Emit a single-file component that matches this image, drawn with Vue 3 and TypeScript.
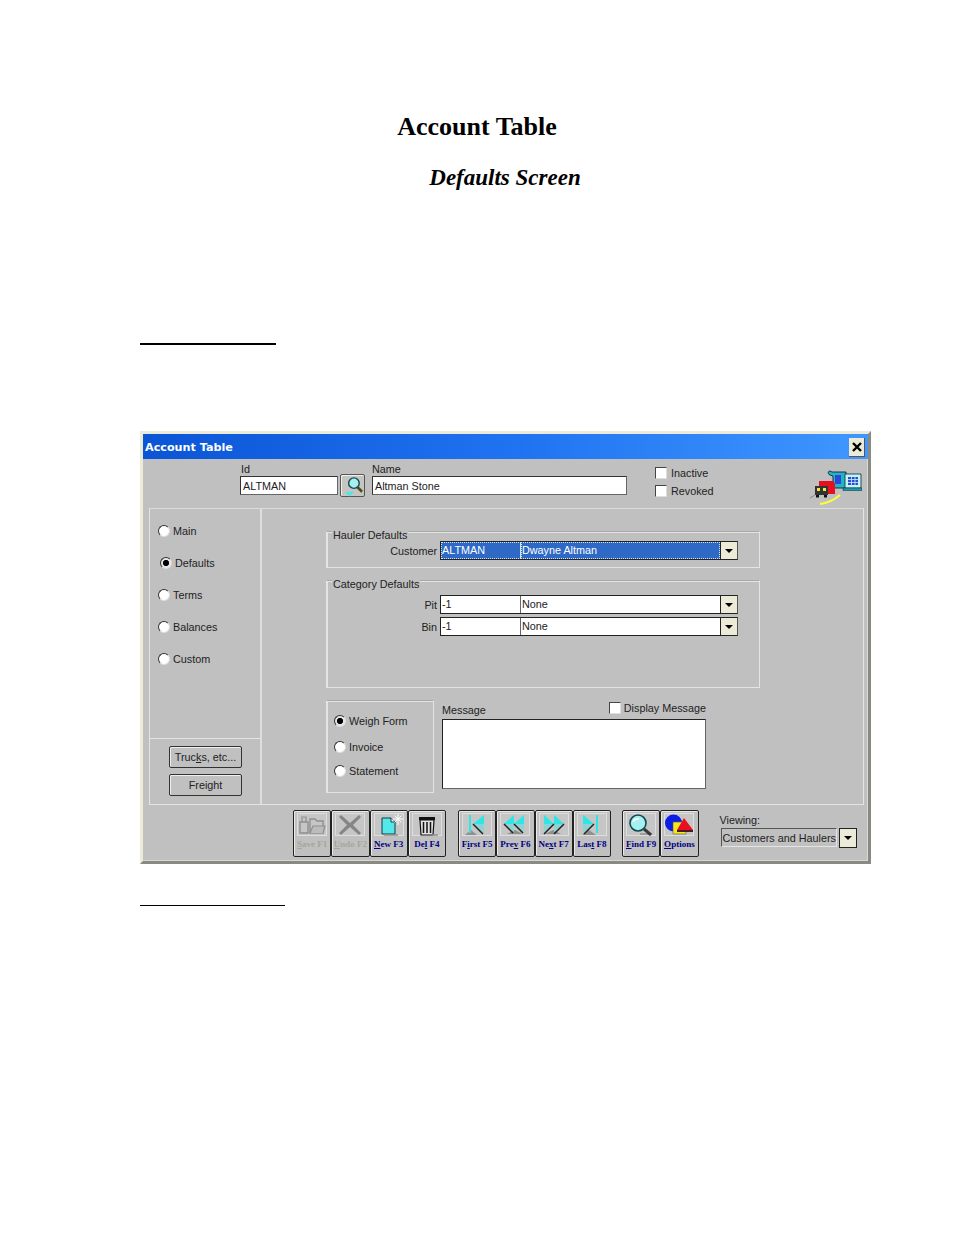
<script setup lang="ts">
interface Shape { d: string; fill?: string; stroke?: string; w?: number }
interface Tool { pre: string; key: string; post: string; off?: boolean; icon: Shape[] }

const navItems = [
  { label: 'Main', on: false },
  { label: 'Defaults', on: true },
  { label: 'Terms', on: false },
  { label: 'Balances', on: false },
  { label: 'Custom', on: false },
]
const formItems = [
  { label: 'Weigh Form', on: true, cls: 'w1' },
  { label: 'Invoice', on: false, cls: 'w2' },
  { label: 'Statement', on: false, cls: 'w3' },
]
const shade = '#8f8f8f'
const cyan = '#2fe6e6'
const pale = '#8fd2d2'
const edge = '#222'
const groups: Tool[][] = [
  [
    { pre: '', key: 'S', post: 'ave F1', off: true, icon: [
      { d: 'M3 9h8v11H3z', fill: 'none', stroke: '#8f8f8f', w: 1.4 },
      { d: 'M5 9V4h4v5', fill: 'none', stroke: '#8f8f8f', w: 1.2 },
      { d: 'M13 6h5l2 2h6v12H13z', fill: 'none', stroke: '#8f8f8f', w: 1.4 },
      { d: 'M13 20l3-7h12l-2 7', fill: '#bcbcbc', stroke: '#8f8f8f', w: 1.2 },
    ] },
    { pre: '', key: 'U', post: 'ndo F2', off: true, icon: [
      { d: 'M6 2l9 8 9-8 2 2-8 8 8 8-2 2-9-8-9 8-2-2 8-8-8-8z', fill: '#858585' },
    ] },
    { pre: '', key: 'N', post: 'ew F3', icon: [
      { d: 'M8 5h9l4 4v12H8z', fill: '#55e8e8', stroke: '#0c3a4a', w: 1 },
      { d: 'M17 5v4h4', fill: '#fff', stroke: '#0c3a4a', w: 1 },
      { d: 'M24 1v11M19 6h10M20.5 2.5l7 7M27.5 2.5l-7 7', fill: 'none', stroke: '#fff', w: 1 },
      { d: 'M10 22h14', fill: 'none', stroke: shade, w: 1.5 },
    ] },
    { pre: 'De', key: 'l', post: ' F4', icon: [
      { d: 'M7 4h16v3H7z', fill: '#111' },
      { d: 'M8 7h14l-1 15H9z', fill: '#e2e2e2', stroke: '#111', w: 1.2 },
      { d: 'M11.5 9v11M15 9v11M18.5 9v11', fill: 'none', stroke: '#111', w: 1.5 },
      { d: 'M20 22h6', fill: 'none', stroke: shade, w: 1.5 },
    ] },
  ],
  [
    { pre: 'F', key: 'i', post: 'rst F5', icon: [
      { d: 'M3 22l6-5 6 5z', fill: shade },
      { d: 'M7 2h2v18H7z', fill: cyan },
      { d: 'M22 2v18L11 11z', fill: pale },
      { d: 'M22 2v9H11z', fill: cyan },
      { d: 'M11 11l10 10', fill: 'none', stroke: edge, w: 1.5 },
    ] },
    { pre: 'Pre', key: 'v', post: ' F6', icon: [
      { d: 'M7 21l8-4 8 4z', fill: shade },
      { d: 'M14 2v17L4 11z', fill: pale },
      { d: 'M14 2v9H4z', fill: cyan },
      { d: 'M24 2v17L14 11z', fill: pale },
      { d: 'M24 2v9H14z', fill: cyan },
      { d: 'M4 11l9 9M14 11l9 9', fill: 'none', stroke: edge, w: 1.5 },
    ] },
    { pre: 'Ne', key: 'x', post: 't F7', icon: [
      { d: 'M6 21l8-4 8 4z', fill: shade },
      { d: 'M5 2v17l10-8z', fill: pale },
      { d: 'M5 2v9h10z', fill: cyan },
      { d: 'M15 2v17l10-8z', fill: pale },
      { d: 'M15 2v9h10z', fill: cyan },
      { d: 'M15 11l-10 10M25 11l-10 10', fill: 'none', stroke: edge, w: 1.5 },
    ] },
    { pre: 'Las', key: 't', post: ' F8', icon: [
      { d: 'M5 22l7-5 7 5z', fill: shade },
      { d: 'M6 2v18l11-9z', fill: pale },
      { d: 'M6 2v9h11z', fill: cyan },
      { d: 'M19 2h2v18h-2z', fill: cyan },
      { d: 'M17 11L7 21', fill: 'none', stroke: edge, w: 1.5 },
    ] },
  ],
  [
    { pre: '', key: 'F', post: 'ind F9', icon: [
      { d: 'M14 21h12', fill: 'none', stroke: shade, w: 1.5 },
      { d: 'M4 10a8 8 0 1 0 16 0a8 8 0 1 0-16 0z', fill: '#a6f0f0', stroke: '#0b4a55', w: 1.6 },
      { d: 'M7 9a5 5 0 0 1 6-3', fill: 'none', stroke: '#fff', w: 1.8 },
      { d: 'M18 16l7 6', fill: 'none', stroke: '#3a3a3a', w: 3 },
    ] },
    { pre: '', key: 'O', post: 'ptions', icon: [
      { d: 'M1 10a8.5 8.5 0 1 0 17 0a8.5 8.5 0 1 0-17 0z', fill: '#0a1ee6' },
      { d: 'M9 9h13v12H9z', fill: '#f5e61e', stroke: '#555', w: 0.6 },
      { d: 'M20 5l9 12H13z', fill: '#e60f1e' },
      { d: 'M13 17h16v2H13z', fill: '#4a1a2a' },
    ] },
  ],
]
const idIcon: Shape[] = [
  { d: 'M4 17h10l-5 5z', fill: '#53e5e5' },
  { d: 'M8 8a5.5 5.5 0 1 0 11 0a5.5 5.5 0 1 0-11 0z', fill: '#a6f0f0', stroke: '#17465a', w: 1.5 },
  { d: 'M17 12l5 5', fill: 'none', stroke: '#4d4a1e', w: 2.8 },
]
const logo: Shape[] = [
  { d: 'M22 4c-4-3-5 2-2 3l3 1v12h13V4z', fill: '#1fb4c8', stroke: '#123', w: 0.9 },
  { d: 'M25 7h6v9h-6z', fill: '#2f45d8' },
  { d: 'M35 6h16v14H35z', fill: '#bff7f7', stroke: '#123', w: 0.8 },
  { d: 'M38 9h10v8H38z', fill: '#3348d8' },
  { d: 'M38 11.5h10M38 14.5h10M41.5 9v8M45 9v8', fill: 'none', stroke: '#bff7f7', w: 0.8 },
  { d: 'M33 20h19v2.5H33z', fill: '#13a0ad', stroke: '#123', w: 0.5 },
  { d: 'M9 13h14l2 3v10H9z', fill: '#e60f1e' },
  { d: 'M5 18h13v9H5z', fill: '#333' },
  { d: 'M7 20h3v3H7zM13 20h3v3h-3z', fill: '#f0e64a' },
  { d: 'M6 27h3v2.5H6zM14 27h3v2.5h-3z', fill: '#111' },
  { d: 'M0 30l5-3', fill: 'none', stroke: '#888', w: 1 },
  { d: 'M10 36c8-1 14-4 20-9', fill: 'none', stroke: '#ffff33', w: 2 },
]
</script>

<template>
  <div class="page">
    <h1 class="title">Account Table</h1>
    <h2 class="subtitle">Defaults Screen</h2>
    <div class="rule rule-a"></div>

    <section class="window">
      <header class="titlebar">
        <span>Account Table</span>
        <span class="close">
          <svg width="10" height="10" viewBox="0 0 10 10"><path d="M1 1l8 8M9 1l-8 8" stroke="#000" stroke-width="2.4" /></svg>
        </span>
      </header>

      <div class="top">
        <div class="field id-field">
          <label>Id</label>
          <div class="input">ALTMAN</div>
        </div>
        <button class="find">
          <svg width="24" height="22" viewBox="0 0 24 22"><path v-for="(s, i) in idIcon" :key="i" :d="s.d" :fill="s.fill" :stroke="s.stroke" :stroke-width="s.w" /></svg>
        </button>
        <div class="field name-field">
          <label>Name</label>
          <div class="input">Altman Stone</div>
        </div>
        <div class="checks">
          <div class="check-row"><span class="check"></span>Inactive</div>
          <div class="check-row"><span class="check"></span>Revoked</div>
        </div>
        <svg class="logo" width="52" height="38" viewBox="0 0 52 38"><path v-for="(s, i) in logo" :key="i" :d="s.d" :fill="s.fill" :stroke="s.stroke" :stroke-width="s.w" /></svg>
      </div>

      <div class="panel">
        <aside class="nav">
          <div class="nav-list">
            <div v-for="item in navItems" :key="item.label" class="radio-row" :class="{ shifted: item.on }">
              <span class="radio" :class="{ on: item.on }"></span>{{ item.label }}
            </div>
          </div>
          <div class="nav-buttons">
            <button class="push">Truc<u>k</u>s, etc...</button>
            <button class="push">Freight</button>
          </div>
        </aside>

        <div class="content">
          <div class="group hauler">
            <span class="legend">Hauler Defaults</span>
            <div class="row">
              <span class="row-label">Customer</span>
              <div class="combo selected">
                <span class="cell first">ALTMAN</span>
                <span class="cell second">Dwayne Altman</span>
                <span class="arrow"><i></i></span>
              </div>
            </div>
          </div>

          <div class="group category">
            <span class="legend">Category Defaults</span>
            <div class="row">
              <span class="row-label">Pit</span>
              <div class="combo">
                <span class="cell first">-1</span>
                <span class="cell second">None</span>
                <span class="arrow"><i></i></span>
              </div>
            </div>
            <div class="row">
              <span class="row-label">Bin</span>
              <div class="combo">
                <span class="cell first">-1</span>
                <span class="cell second">None</span>
                <span class="arrow"><i></i></span>
              </div>
            </div>
          </div>

          <div class="lower">
            <div class="group forms">
              <div v-for="item in formItems" :key="item.label" class="radio-row" :class="item.cls">
                <span class="radio" :class="{ on: item.on }"></span>{{ item.label }}
              </div>
            </div>
            <div class="message">
              <div class="message-head">
                <span>Message</span>
                <span class="check-row display"><span class="check"></span>Display Message</span>
              </div>
              <div class="textarea"></div>
            </div>
          </div>
        </div>
      </div>

      <footer class="toolbar">
        <div v-for="(group, g) in groups" :key="g" class="tool-group">
          <button v-for="tool in group" :key="tool.pre + tool.key + tool.post" class="tool" :class="{ off: tool.off }">
            <span class="tile">
              <svg width="30" height="23" viewBox="0 0 30 23"><path v-for="(s, i) in tool.icon" :key="i" :d="s.d" :fill="s.fill" :stroke="s.stroke" :stroke-width="s.w" /></svg>
            </span>
            <span class="tool-label">{{ tool.pre }}<u>{{ tool.key }}</u>{{ tool.post }}</span>
          </button>
        </div>
        <div class="viewing">
          <span>Viewing:</span>
          <div class="viewing-row">
            <div class="viewing-box">Customers and Haulers</div>
            <span class="arrow big"><i></i></span>
          </div>
        </div>
      </footer>
    </section>

    <div class="rule rule-b"></div>
  </div>
</template>

<style scoped>
.page {
  width: 954px;
  height: 1235px;
  overflow: hidden;
  background: #fff;
  box-sizing: border-box;
  padding-top: 112px;
  font-family: "Liberation Sans", Arial, sans-serif;
}
.title {
  margin: 0;
  font: bold 26px/30px "Liberation Serif", serif;
  color: #000;
  text-align: center;
}
.subtitle {
  margin: 21px 0 0;
  padding-left: 56px;
  font: italic bold 23px/30px "Liberation Serif", serif;
  color: #000;
  text-align: center;
}
.rule {
  height: 1px;
  margin-left: 140px;
  background: #000;
}
.rule-a {
  width: 136px;
  height: 2px;
  margin-top: 150px;
}
.rule-b {
  width: 145px;
  margin-top: 41px;
}
.window {
  width: 731px;
  height: 433px;
  margin: 86px 0 0 140px;
  box-sizing: border-box;
  background: #c0c0c0;
  border: 3px solid #ecebd8;
  border-right-color: #8a8a80;
  border-bottom-color: #8a8a80;
  box-shadow: inset -1px -1px 0 #d8d8d8;
  font-size: 10.8px;
  color: #222;
}
.titlebar {
  height: 25px;
  display: flex;
  align-items: center;
  justify-content: space-between;
  padding: 1px 3px 0 2px;
  box-sizing: border-box;
  background: linear-gradient(90deg, #0a55d6 0%, #1f72f0 50%, #3f97ff 100%);
  color: #fff;
  font: bold 11.2px "DejaVu Sans", sans-serif;
}
.close {
  width: 15px;
  height: 18px;
  display: flex;
  align-items: center;
  justify-content: center;
  background: #ecebd8;
  border-right: 1px solid #555;
  border-bottom: 1px solid #555;
}
.top {
  height: 49px;
  display: flex;
  align-items: flex-start;
  padding-left: 97px;
}
.field {
  display: flex;
  flex-direction: column;
  padding-top: 3px;
}
.field label {
  height: 14px;
  line-height: 14px;
  padding-left: 1px;
}
.name-field label {
  padding-left: 0;
}
.input {
  height: 19px;
  box-sizing: border-box;
  padding-left: 2px;
  line-height: 19px;
  background: #fff;
  border: 1px solid #333;
  border-right-color: #666;
  border-bottom-color: #666;
}
.id-field {
  width: 98px;
}
.name-field {
  width: 255px;
  margin-left: 7px;
}
.find {
  width: 25px;
  height: 23px;
  margin: 15px 0 0 2px;
  padding: 0;
  display: flex;
  align-items: center;
  justify-content: center;
  background: #c6c6c0;
  border: 1px solid #555;
  border-radius: 2px;
  box-shadow: inset 1px 1px 0 #f2f2ea;
}
.checks {
  margin: 7px 0 0 28px;
  display: flex;
  flex-direction: column;
  gap: 4px;
  width: 155px;
}
.check-row {
  display: flex;
  align-items: center;
  height: 14px;
  line-height: 14px;
}
.check {
  width: 12px;
  height: 12px;
  margin-right: 4px;
  box-sizing: border-box;
  background: #fff;
  border: 1px solid #444;
  border-right-color: #ddd;
  border-bottom-color: #ddd;
  flex: none;
}
.logo {
  margin-top: 9px;
  flex: none;
}
.panel {
  width: 715px;
  height: 297px;
  margin-left: 6px;
  box-sizing: border-box;
  display: flex;
  border: 1px solid #e4e4e4;
  border-top-color: #dcdcdc;
  border-right-color: #e4e4e4;
}
.nav {
  width: 112px;
  flex: none;
  display: flex;
  flex-direction: column;
  border-right: 2px solid #dedede;
  box-sizing: border-box;
}
.nav-list {
  height: 230px;
  box-sizing: border-box;
  padding: 13px 0 0 8px;
  display: flex;
  flex-direction: column;
  gap: 14px;
  border-bottom: 1px solid #e4e4e4;
}
.radio-row {
  height: 18px;
  display: flex;
  align-items: center;
}
.shifted {
  padding-left: 2px;
}
.radio {
  width: 12px;
  height: 12px;
  margin-right: 3px;
  box-sizing: border-box;
  flex: none;
  border-radius: 50%;
  background: #fff;
  border: 1.5px solid #333;
  border-right-color: #ddd;
  border-bottom-color: #ddd;
}
.radio.on {
  background: radial-gradient(circle, #000 0 2.8px, #e6e6e6 3.3px);
}
.nav-buttons {
  flex: 1;
  padding: 7px 0 0 19px;
  display: flex;
  flex-direction: column;
  gap: 6px;
}
.push {
  width: 73px;
  height: 22px;
  padding: 0;
  font: 10.8px "Liberation Sans", Arial, sans-serif;
  color: #222;
  background: #c0c0c0;
  border: 1px solid #333;
  border-radius: 2px;
  box-shadow: inset 1px 1px 0 #eee;
}
.content {
  flex: 1;
  padding: 22px 0 0 64px;
}
.group {
  position: relative;
  width: 434px;
  box-sizing: border-box;
  border: 1px solid #e4e4e4;
  border-top-color: #a8a8a8;
  box-shadow: inset 1px 1px 0 #e4e4e4;
}
.legend {
  position: absolute;
  top: -4px;
  left: 5px;
  padding: 0 1px;
  line-height: 14px;
  background: #c0c0c0;
}
.hauler {
  height: 37px;
  padding-top: 9px;
}
.category {
  height: 108px;
  margin-top: 12px;
  padding-top: 14px;
  display: flex;
  flex-direction: column;
  gap: 3px;
}
.row {
  display: flex;
  align-items: center;
}
.row-label {
  width: 110px;
  text-align: right;
  flex: none;
}
.combo {
  width: 298px;
  height: 19px;
  margin-left: 3px;
  display: flex;
  box-sizing: border-box;
  border: 1px solid #222;
  border-right-color: #555;
  background: #fff;
}
.cell {
  line-height: 17px;
  white-space: nowrap;
  padding-left: 1px;
  box-sizing: border-box;
}
.first {
  width: 80px;
  border-right: 1px solid #666;
}
.second {
  flex: 1;
}
.selected {
  background: #2f69c6;
  color: #fff;
}
.selected .cell {
  outline: 1px dotted #d8e4f5;
  outline-offset: -1px;
}
.selected .first {
  border-right-color: #d8e4f5;
}
.arrow {
  width: 17px;
  flex: none;
  display: flex;
  align-items: center;
  justify-content: center;
  background: #ecebd8;
  border-left: 1px solid #222;
  box-sizing: border-box;
}
.arrow i {
  width: 0;
  height: 0;
  border: 4px solid transparent;
  border-top: 4px solid #000;
  border-bottom: 0;
}
.lower {
  display: flex;
  margin-top: 12px;
}
.forms {
  width: 108px;
  height: 93px;
  flex: none;
  padding: 11px 0 0 7px;
}
.w2 {
  margin-top: 8px;
}
.w3 {
  margin-top: 6px;
}
.message {
  margin-left: 8px;
  width: 264px;
}
.message-head {
  height: 19px;
  display: flex;
  justify-content: space-between;
}
.message-head > span:first-child {
  padding-top: 3px;
  line-height: 14px;
}
.display {
  margin-top: 1px;
}
.display .check {
  margin-right: 3px;
}
.textarea {
  height: 70px;
  box-sizing: border-box;
  background: #fff;
  border: 1px solid #222;
  border-right-color: #666;
  border-bottom-color: #666;
}
.toolbar {
  display: flex;
  padding: 5px 0 0 150px;
}
.tool-group {
  display: flex;
  margin-right: 12px;
}
.tool-group:nth-child(2) {
  margin-right: 11px;
}
.tool-group:nth-child(3) {
  margin-right: 21px;
}
.tool {
  width: 38.25px;
  height: 47px;
  padding: 2px 0 0;
  box-sizing: border-box;
  display: flex;
  flex-direction: column;
  align-items: center;
  background: #c0c0c0;
  border: 1px solid #222;
  border-radius: 2px;
  box-shadow: inset 1px 1px 0 #eaeaea;
}
.tile {
  width: 30px;
  height: 23px;
  display: flex;
  align-items: center;
  justify-content: center;
  box-sizing: border-box;
  background: #c6c6c6;
  box-shadow: inset 0 0 0 1px #dedede;
  overflow: hidden;
}
.tool-label {
  margin-top: 2px;
  font: bold 9px/12px "Liberation Serif", serif;
  color: #000080;
  white-space: nowrap;
}
.tool.off .tool-label {
  color: #a6a69a;
}
.viewing {
  display: flex;
  flex-direction: column;
  line-height: 14px;
  padding-top: 3px;
}
.viewing-row {
  display: flex;
  margin-top: 1px;
  padding-left: 1px;
}
.viewing-box {
  width: 116px;
  height: 19px;
  box-sizing: border-box;
  line-height: 18px;
  padding-left: 1px;
  white-space: nowrap;
  overflow: hidden;
  border: 1px solid #555;
  border-right-color: #e4e4e4;
  border-bottom-color: #e4e4e4;
}
.arrow.big {
  width: 18px;
  height: 20px;
  margin-left: 2px;
  border: 1px solid #222;
}
</style>

<style>
body {
  margin: 0;
}
</style>
